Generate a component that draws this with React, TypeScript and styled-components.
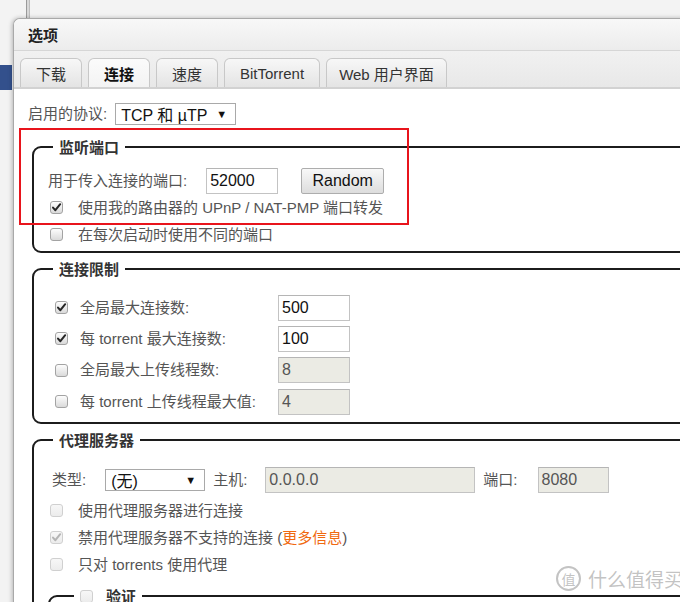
import styled, { createGlobalStyle } from "styled-components";

const GlobalStyle = createGlobalStyle`
  html, body {
    margin: 0;
    padding: 0;
  }
  body {
    width: 680px;
    height: 602px;
    overflow: hidden;
    background: #f3f3f3;
    font-family: "Liberation Sans", Arial, "Noto Sans CJK SC", sans-serif;
  }
`;

const Desktop = styled.div`
  position: relative;
  width: 680px;
  height: 602px;
  overflow: hidden;
  box-sizing: border-box;
  padding: 18px 0 0 13px;
  background: #f3f3f3;
`;

const TopRule = styled.div`
  position: absolute;
  left: 26px;
  top: 0;
  width: 2px;
  height: 18px;
  background: #d8d8d8;
  border-left: 1px solid #9a9a9a;
  border-right: 1px solid #bdbdbd;
`;

const SideTab = styled.div`
  position: absolute;
  left: 0;
  top: 65px;
  width: 12px;
  height: 25px;
  background: #33508c;
`;

const Window = styled.div`
  position: relative;
  width: 780px;
  height: 640px;
  background: #fff;
  border: 1px solid #a9a9a9;
  border-right: none;
  border-radius: 7px 0 0 0;
  box-shadow: -1px 0 4px rgba(0, 0, 0, 0.25);
  overflow: hidden;
`;

const TitleBar = styled.div`
  height: 31px;
  display: flex;
  align-items: center;
  padding-left: 14px;
  font-size: 15px;
  font-weight: bold;
  color: #222;
  background: linear-gradient(#f8f8f8, #ececec);
  border-bottom: 1px solid #d6d6d6;
`;

const TabBar = styled.div`
  height: 31px;
  display: flex;
  align-items: flex-end;
  gap: 6px;
  padding: 5px 0 0 6px;
  background: linear-gradient(#f1f1f1, #e8e8e8);
  border-bottom: 2px solid #d2d2d2;
`;

const Tab = styled.div<{ $active?: boolean; $w: number }>`
  flex: none;
  width: ${(p) => p.$w}px;
  height: 29px;
  box-sizing: border-box;
  display: flex;
  align-items: center;
  justify-content: center;
  border: 1px solid #c8c8c8;
  border-bottom: none;
  border-radius: 6px 6px 0 0;
  font-size: 15px;
  white-space: nowrap;
  color: ${(p) => (p.$active ? "#111" : "#333")};
  font-weight: ${(p) => (p.$active ? "bold" : "normal")};
  background: ${(p) =>
    p.$active ? "linear-gradient(#fbfbfb, #f3f3f3)" : "linear-gradient(#f7f7f7, #e4e4e4)"};
`;

const Content = styled.div`
  padding: 14px 0 0 14px;
`;

const Row = styled.div<{ $h?: number; $mt?: number }>`
  display: flex;
  align-items: center;
  height: ${(p) => p.$h ?? 27}px;
  margin-top: ${(p) => p.$mt ?? 0}px;
`;

const Label = styled.span<{ $ml?: number; $w?: number }>`
  font-family: "Liberation Sans", Arial, "Noto Sans CJK SC", sans-serif;
  font-size: 15px;
  line-height: 20px;
  color: #555;
  white-space: nowrap;
  margin-left: ${(p) => p.$ml ?? 0}px;
  ${(p) => (p.$w ? `width: ${p.$w}px;` : "")}
`;

const Link = styled.span`
  color: #f0690f;
`;

const FakeSelect = styled.div<{ $w: number; $ml?: number }>`
  width: ${(p) => p.$w}px;
  height: 22px;
  box-sizing: border-box;
  margin-left: ${(p) => p.$ml ?? 0}px;
  display: flex;
  align-items: center;
  justify-content: space-between;
  padding: 0 8px 0 5px;
  border: 1px solid #a9a9a9;
  background: #fff;
  font-size: 16px;
  color: #111;
  white-space: nowrap;
`;

const Arrow = styled.span`
  font-size: 11px;
  color: #111;
`;

const TextBox = styled.div<{ $w: number; $ml?: number; $disabled?: boolean }>`
  width: ${(p) => p.$w}px;
  height: 26px;
  box-sizing: border-box;
  margin-left: ${(p) => p.$ml ?? 0}px;
  display: flex;
  align-items: center;
  padding-left: 3px;
  border: 1px solid #c3c3c3;
  border-top-color: #b5b5b5;
  background: ${(p) => (p.$disabled ? "#ebebe4" : "#fff")};
  color: ${(p) => (p.$disabled ? "#555" : "#111")};
  font-size: 16px;
`;

const Button = styled.div<{ $ml?: number }>`
  width: 83px;
  height: 26px;
  box-sizing: border-box;
  margin-left: ${(p) => p.$ml ?? 0}px;
  display: flex;
  align-items: center;
  justify-content: center;
  border: 1px solid #adadad;
  border-radius: 2px;
  background: linear-gradient(#f8f8f8, #dddddd);
  font-size: 16px;
  color: #111;
`;

const Fieldset = styled.fieldset<{ $mt?: number; $ml?: number; $pb?: number }>`
  margin: ${(p) => p.$mt ?? 6}px 0 0 ${(p) => p.$ml ?? 4}px;
  padding: 0 14px ${(p) => p.$pb ?? 4}px;
  border: 2px solid #1c1c1c;
  border-radius: 9px;
  min-width: 0;
`;

const Legend = styled.legend<{ $ml?: number }>`
  margin-left: ${(p) => p.$ml ?? 5}px;
  padding: 0 6px;
  font-size: 15px;
  line-height: 20px;
  font-weight: bold;
  color: #333;
  font-family: "Noto Sans CJK SC", sans-serif;
  display: flex;
  align-items: center;
  gap: 13px;
`;

const Box = styled.span<{ $disabled?: boolean; $ml?: number }>`
  flex: none;
  width: 13px;
  height: 13px;
  box-sizing: border-box;
  margin-left: ${(p) => p.$ml ?? 2}px;
  display: flex;
  align-items: center;
  justify-content: center;
  border: 1px solid ${(p) => (p.$disabled ? "#d0d0d0" : "#a3a3a3")};
  border-radius: 3px;
  background: ${(p) =>
    p.$disabled ? "linear-gradient(#f7f7f7, #ececec)" : "linear-gradient(#fdfdfd, #dadada)"};
`;

function Checkbox({ checked, disabled, ml }: { checked?: boolean; disabled?: boolean; ml?: number }) {
  return (
    <Box $disabled={disabled} $ml={ml}>
      {checked && (
        <svg width="11" height="11" viewBox="0 0 11 11">
          <path
            d="M2 5.6 L4.4 8.2 L9.2 2.2"
            fill="none"
            stroke={disabled ? "#b4b4b4" : "#262626"}
            strokeWidth="2"
            strokeLinecap="round"
            strokeLinejoin="round"
          />
        </svg>
      )}
    </Box>
  );
}

const Highlight = styled.div`
  position: absolute;
  left: 19px;
  top: 128px;
  width: 390px;
  height: 97px;
  box-sizing: border-box;
  border: 2px solid #e8141c;
  pointer-events: none;
`;

const Watermark = styled.div`
  position: absolute;
  left: 556px;
  top: 566px;
  display: flex;
  align-items: center;
  gap: 7px;
  white-space: nowrap;
  font-family: "Noto Sans CJK SC", sans-serif;
  font-size: 19px;
  line-height: 24px;
  color: rgba(175, 175, 175, 0.75);
`;

const WaterCircle = styled.span`
  width: 21px;
  height: 21px;
  display: flex;
  align-items: center;
  justify-content: center;
  border: 2px solid rgba(175, 175, 175, 0.75);
  border-radius: 50%;
  font-size: 14px;
`;

const tabs = [
  { name: "下载", w: 62 },
  { name: "连接", w: 62 },
  { name: "速度", w: 62 },
  { name: "BitTorrent", w: 96 },
  { name: "Web 用户界面", w: 121 },
];

const limits = [
  { label: "全局最大连接数:", value: "500", checked: true },
  { label: "每 torrent 最大连接数:", value: "100", checked: true },
  { label: "全局最大上传线程数:", value: "8", checked: false },
  { label: "每 torrent 上传线程最大值:", value: "4", checked: false },
];

export default function App() {
  return (
    <>
      <GlobalStyle />
      <Desktop>
        <TopRule />
        <SideTab />
        <Window>
          <TitleBar>选项</TitleBar>
          <TabBar>
            {tabs.map((t) => (
              <Tab key={t.name} $w={t.w} $active={t.name === "连接"}>
                {t.name}
              </Tab>
            ))}
          </TabBar>
          <Content>
            <Row $h={22}>
              <Label>启用的协议:</Label>
              <FakeSelect $w={121} $ml={8}>
                <span>TCP 和 µTP</span>
                <Arrow>▼</Arrow>
              </FakeSelect>
            </Row>

            <Fieldset $mt={12} $pb={3}>
              <Legend>监听端口</Legend>
              <Row $h={26} $mt={11}>
                <Label>用于传入连接的端口:</Label>
                <TextBox $w={72} $ml={19}>52000</TextBox>
                <Button $ml={23}>Random</Button>
              </Row>
              <Row>
                <Checkbox checked />
                <Label $ml={15}>使用我的路由器的 UPnP / NAT-PMP 端口转发</Label>
              </Row>
              <Row>
                <Checkbox />
                <Label $ml={15}>在每次启动时使用不同的端口</Label>
              </Row>
            </Fieldset>

            <Fieldset $pb={5}>
              <Legend>连接限制</Legend>
              {limits.map((l, i) => (
                <Row key={l.label} $h={31.3} $mt={i === 0 ? 13 : 0}>
                  <Checkbox checked={l.checked} ml={7} />
                  <Label $ml={12} $w={198}>
                    {l.label}
                  </Label>
                  <TextBox $w={72} $disabled={!l.checked}>
                    {l.value}
                  </TextBox>
                </Row>
              ))}
            </Fieldset>

            <Fieldset>
              <Legend>代理服务器</Legend>
              <Row $h={26} $mt={17}>
                <Label $ml={4}>类型:</Label>
                <FakeSelect $w={100} $ml={19}>
                  <span>(无)</span>
                  <Arrow>▼</Arrow>
                </FakeSelect>
                <Label $ml={8}>主机:</Label>
                <TextBox $w={210} $ml={18} $disabled>
                  0.0.0.0
                </TextBox>
                <Label $ml={8}>端口:</Label>
                <TextBox $w={71} $ml={20} $disabled>
                  8080
                </TextBox>
              </Row>
              <Row $mt={4}>
                <Checkbox disabled />
                <Label $ml={15}>使用代理服务器进行连接</Label>
              </Row>
              <Row>
                <Checkbox checked disabled />
                <Label $ml={15}>
                  禁用代理服务器不支持的连接 (<Link>更多信息</Link>)
                </Label>
              </Row>
              <Row>
                <Checkbox disabled />
                <Label $ml={15}>只对 torrents 使用代理</Label>
              </Row>
              <Fieldset $mt={8} $ml={0}>
                <Legend $ml={10}>
                  <Checkbox disabled ml={0} />
                  验证
                </Legend>
                <Row $h={60} />
              </Fieldset>
            </Fieldset>
          </Content>
        </Window>
        <Highlight />
        <Watermark>
          <WaterCircle>值</WaterCircle>
          什么值得买
        </Watermark>
      </Desktop>
    </>
  );
}
